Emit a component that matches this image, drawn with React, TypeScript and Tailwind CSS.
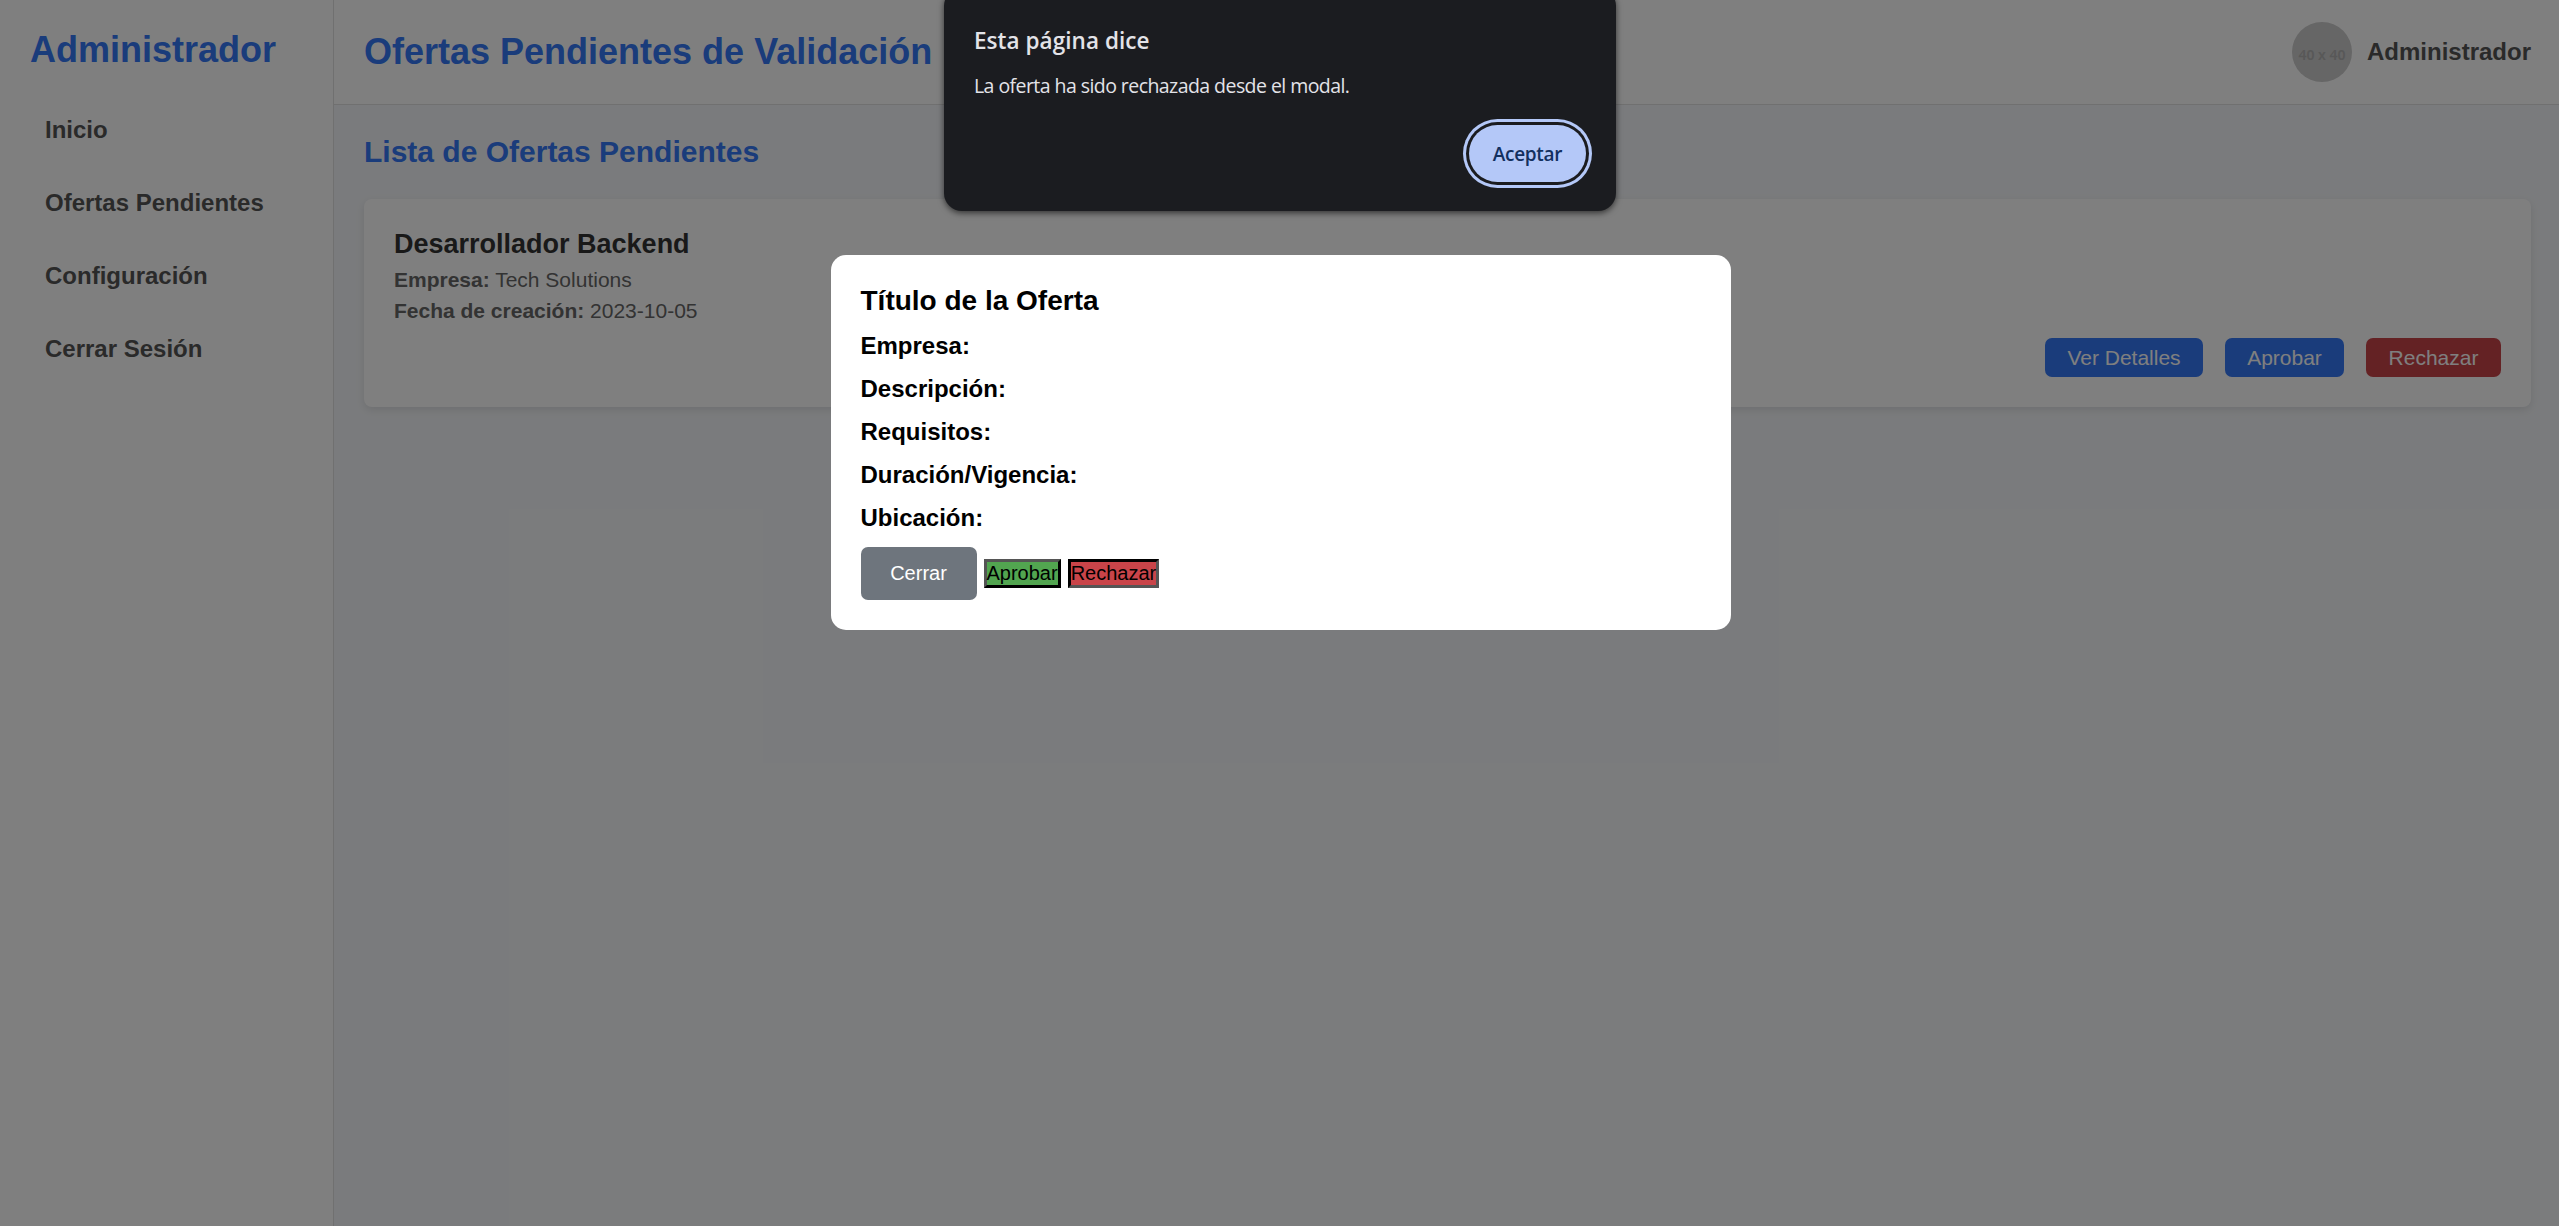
const navItems = ['Inicio', 'Ofertas Pendientes', 'Configuración', 'Cerrar Sesión'];
const fields = ['Empresa:', 'Descripción:', 'Requisitos:', 'Duración/Vigencia:', 'Ubicación:'];

function Sidebar() {
  return (
    <aside className="w-[334px] shrink-0 border-r border-[#e0e0e0] bg-white px-[30px] pt-[29px]">
      <h2 className="text-[36px] leading-[41px] font-bold text-[#3478f6]">Administrador</h2>
      <nav className="mt-[31px] flex flex-col gap-[15px]">
        {navItems.map((item) => (
          <a key={item} className="block h-[58px] whitespace-nowrap px-[15px] py-[15px] text-2xl leading-[28px] font-bold text-[#555]">
            {item}
          </a>
        ))}
      </nav>
    </aside>
  );
}

function Header() {
  return (
    <header className="flex h-[105px] items-center justify-between border-b border-[#e0e0e0] bg-white px-[30px]">
      <h1 className="pb-px text-[36px] leading-[41px] font-bold text-[#3478f6]">Ofertas Pendientes de Validación</h1>
      <div className="flex items-center gap-[15px]">
        <div className="flex size-[60px] items-center justify-center rounded-full bg-[#ccc] pt-[5px] font-['Noto_Sans',sans-serif] text-[14px] leading-none font-semibold text-[#b0b0b0]">
          40 x 40
        </div>
        <span className="text-2xl leading-[28px] font-bold text-[#555]">Administrador</span>
      </div>
    </header>
  );
}

function OfferCard() {
  const button = 'rounded-[7px] h-[39px] text-[21px] leading-[39px] text-white';
  return (
    <article className="h-[208px] rounded-[8px] bg-white p-[30px] shadow-[0_3px_8px_rgba(0,0,0,0.1)]">
      <h3 className="text-[27px] leading-[30px] font-bold text-[#333]">Desarrollador Backend</h3>
      <p className="mt-[9px] text-[21px] leading-[24px] text-[#666]"><strong>Empresa:</strong> Tech Solutions</p>
      <p className="mt-[7px] text-[21px] leading-[24px] text-[#666]"><strong>Fecha de creación:</strong> 2023-10-05</p>
      <div className="mt-[15px] flex justify-end gap-[22px]">
        <button className={button + ' w-[158px] bg-[#3478f6]'}>Ver Detalles</button>
        <button className={button + ' w-[119px] bg-[#3478f6]'}>Aprobar</button>
        <button className={button + ' w-[135px] bg-[#c94449]'}>Rechazar</button>
      </div>
    </article>
  );
}

function OfferModal() {
  return (
    <div className="absolute inset-0 flex items-start justify-center bg-black/50 pt-[255px]">
      <section className="h-[375px] w-[900px] rounded-[15px] bg-white px-[30px] pt-[30px] text-black">
        <h3 className="text-[28px] leading-[32px] font-bold">Título de la Oferta</h3>
        {fields.map((field) => (
          <p key={field} className="mt-[15px] text-2xl leading-[28px] font-bold">{field}</p>
        ))}
        <div className="mt-[15px] flex items-center gap-[7px] text-[20px] leading-[23px]">
          <button className="h-[53px] w-[116px] rounded-[7px] bg-[#6e757d] text-white">Cerrar</button>
          <button className="h-[29px] border-[3px] border-t-[#555] border-r-black border-b-black border-l-[#555] bg-[#52a550]">Aprobar</button>
          <button className="h-[29px] border-[3px] border-t-black border-r-[#555] border-b-[#555] border-l-black bg-[#c94449]">Rechazar</button>
        </div>
      </section>
    </div>
  );
}

function BrowserAlert() {
  return (
    <div className="absolute -top-[12px] left-[944px] h-[223px] w-[672px] rounded-[18px] bg-[#1b1c20] px-[30px] pt-[38px] font-['Open_Sans','Noto_Sans',sans-serif] text-[#e3e3e8] shadow-[0_2px_6px_rgba(0,0,0,0.6)]">
      <h4 className="text-[22.5px] leading-[30px] font-semibold tracking-[0.05px]">Esta página dice</h4>
      <p className="mt-[17px] text-[19.5px] leading-[26px] tracking-[-0.56px]">La oferta ha sido rechazada desde el modal.</p>
      <div className="mt-[26px] flex justify-end">
        <button className="h-[57px] w-[117px] rounded-full bg-[#b4c8f8] pt-[2px] text-[19px] font-semibold tracking-[-0.3px] text-[#12305f] ring-3 ring-[#b4c8f8] ring-offset-3 ring-offset-[#1b1c20]">
          Aceptar
        </button>
      </div>
    </div>
  );
}

export default function App() {
  return (
    <div className="h-[1226px] overflow-hidden font-['Liberation_Sans',Arial,sans-serif]">
      <div className="relative flex h-full w-[2561px] bg-[#f5f7fa]">
        <Sidebar />
        <div className="flex-1">
          <Header />
          <main className="px-[30px] pt-[30px]">
            <h2 className="mb-[31px] text-[30px] leading-[33px] font-bold text-[#3478f6]">Lista de Ofertas Pendientes</h2>
            <OfferCard />
          </main>
        </div>
        <OfferModal />
        <BrowserAlert />
      </div>
    </div>
  );
}
